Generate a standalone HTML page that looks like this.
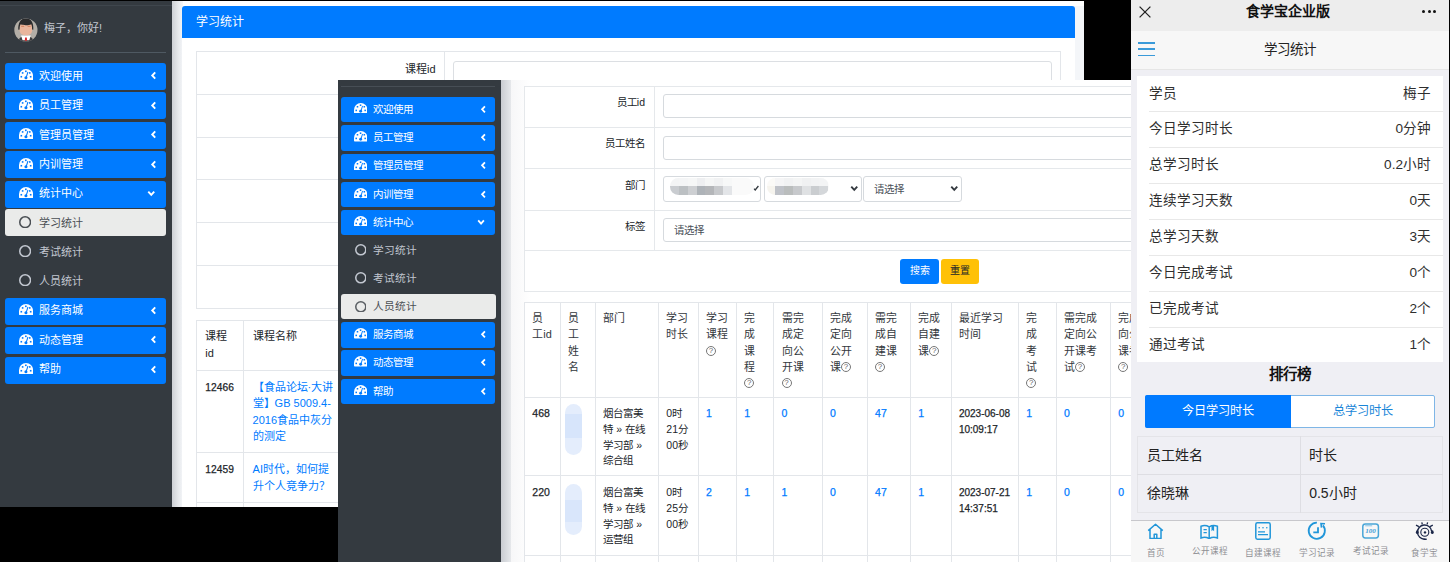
<!DOCTYPE html><html lang="zh-CN"><head><meta charset="utf-8"><style>html,body{margin:0;padding:0;width:1450px;height:562px;overflow:hidden;background:#000;font-family:"Liberation Sans", sans-serif;}div{box-sizing:border-box}</style></head><body>
<div style="position:absolute;left:0;top:1px;width:1084px;height:506px;overflow:hidden;background:#f4f6f9">
<div style="position:absolute;left:171px;top:0px;width:913px;height:5px;background:#fff"></div>
<div style="position:absolute;left:171px;top:0px;width:12px;height:506px;background:linear-gradient(90deg,#c9ccd1,#e6e8eb 60%,#f4f6f9)"></div>
<div style="position:absolute;left:0px;top:0px;width:171.5px;height:506px;background:#343a40"></div>
<div style="position:absolute;left:0px;top:4.2px;width:171.5px;height:1px;background:#3f464d"></div>
<svg style="position:absolute;left:14px;top:16.8px" width="24" height="24" viewBox="0 0 24 24"><defs><clipPath id="cc"><circle cx="11.9" cy="12" r="11.6"/></clipPath></defs><circle cx="11.9" cy="12" r="11.6" fill="#b3aea7"/><g clip-path="url(#cc)"><path d="M4.2 24.5c0.3-4 2-6.3 7.7-6.3s7.4 2.3 7.7 6.3z" fill="#3b3b3d"/><path d="M7 17.6h9.8l-1.5 4.6h-6.8z" fill="#fff"/><path d="M11.1 19.6h1.7l0.3 3.2h-2.3z" fill="#d8262a"/><path d="M5.6 7.5c0-2 1.3-3.8 6.3-3.8s6.3 1.8 6.3 3.8v4.5c0 3.6-2.6 5.3-6.3 5.3s-6.3-1.7-6.3-5.3z" fill="#e9b59c"/><path d="M7.2 8.3h3M13.6 8.3h3" stroke="#c8704a" stroke-width="0.8"/><path d="M4.3 11.8c-0.3-6 1.8-11.5 7.6-11.5s7.9 5.5 7.4 11.5l-1.2-0.3c0-2.2-0.2-4.2-0.9-5.2c-1.5 0.8-4 1-5.5 0.9c-1.6 0-3.6-0.3-5-0.9c-0.9 1.1-1.1 3.1-1.1 5.3z" fill="#2b2b2c"/></g></svg>
<div style="position:absolute;left:44px;top:21.3px;font-size:11px;line-height:12px;color:#c2c7d0;white-space:nowrap;">梅子，你好!</div>
<div style="position:absolute;left:5px;top:51px;width:161px;height:1.3px;background:#4f5962"></div>
<div style="position:absolute;left:5px;top:61.8px;width:161px;height:27px;background:#007bff;border-radius:3px"></div>
<svg style="position:absolute;left:18.6px;top:68.3px" width="14.1" height="11.078571428571427" viewBox="0 0 14 11"><path d="M0 10.2V7A7 7 0 0 1 14 7V10.2Q14 11 13.2 11H0.8Q0 11 0 10.2z" fill="#fff"/><g fill="#007bff"><rect x="2.8" y="3.1" width="1.6" height="1.6"/><rect x="6" y="1.5" width="1.6" height="1.6"/><rect x="9.9" y="3.1" width="1.6" height="1.6"/><rect x="1.5" y="6.9" width="1.6" height="1.6"/><rect x="10.8" y="6.9" width="1.6" height="1.6"/></g><path d="M8.9 3L7.2 8.2" stroke="#007bff" stroke-width="1"/><circle cx="6.9" cy="8.6" r="1.5" fill="#007bff"/></svg>
<div style="position:absolute;left:38.8px;top:68.6px;font-size:11px;line-height:12px;color:#fff;white-space:nowrap;">欢迎使用</div>
<svg style="position:absolute;left:148.9px;top:70.0px" width="9" height="9" viewBox="0 0 10 10"><path d="M6.9 1.5L3.6 5l3.3 3.5" fill="none" stroke="#fff" stroke-width="2.1"/></svg>
<div style="position:absolute;left:5px;top:91.3px;width:161px;height:27px;background:#007bff;border-radius:3px"></div>
<svg style="position:absolute;left:18.6px;top:97.8px" width="14.1" height="11.078571428571427" viewBox="0 0 14 11"><path d="M0 10.2V7A7 7 0 0 1 14 7V10.2Q14 11 13.2 11H0.8Q0 11 0 10.2z" fill="#fff"/><g fill="#007bff"><rect x="2.8" y="3.1" width="1.6" height="1.6"/><rect x="6" y="1.5" width="1.6" height="1.6"/><rect x="9.9" y="3.1" width="1.6" height="1.6"/><rect x="1.5" y="6.9" width="1.6" height="1.6"/><rect x="10.8" y="6.9" width="1.6" height="1.6"/></g><path d="M8.9 3L7.2 8.2" stroke="#007bff" stroke-width="1"/><circle cx="6.9" cy="8.6" r="1.5" fill="#007bff"/></svg>
<div style="position:absolute;left:38.8px;top:98.1px;font-size:11px;line-height:12px;color:#fff;white-space:nowrap;">员工管理</div>
<svg style="position:absolute;left:148.9px;top:99.5px" width="9" height="9" viewBox="0 0 10 10"><path d="M6.9 1.5L3.6 5l3.3 3.5" fill="none" stroke="#fff" stroke-width="2.1"/></svg>
<div style="position:absolute;left:5px;top:120.8px;width:161px;height:27px;background:#007bff;border-radius:3px"></div>
<svg style="position:absolute;left:18.6px;top:127.3px" width="14.1" height="11.078571428571427" viewBox="0 0 14 11"><path d="M0 10.2V7A7 7 0 0 1 14 7V10.2Q14 11 13.2 11H0.8Q0 11 0 10.2z" fill="#fff"/><g fill="#007bff"><rect x="2.8" y="3.1" width="1.6" height="1.6"/><rect x="6" y="1.5" width="1.6" height="1.6"/><rect x="9.9" y="3.1" width="1.6" height="1.6"/><rect x="1.5" y="6.9" width="1.6" height="1.6"/><rect x="10.8" y="6.9" width="1.6" height="1.6"/></g><path d="M8.9 3L7.2 8.2" stroke="#007bff" stroke-width="1"/><circle cx="6.9" cy="8.6" r="1.5" fill="#007bff"/></svg>
<div style="position:absolute;left:38.8px;top:127.6px;font-size:11px;line-height:12px;color:#fff;white-space:nowrap;">管理员管理</div>
<svg style="position:absolute;left:148.9px;top:129.0px" width="9" height="9" viewBox="0 0 10 10"><path d="M6.9 1.5L3.6 5l3.3 3.5" fill="none" stroke="#fff" stroke-width="2.1"/></svg>
<div style="position:absolute;left:5px;top:150.3px;width:161px;height:27px;background:#007bff;border-radius:3px"></div>
<svg style="position:absolute;left:18.6px;top:156.8px" width="14.1" height="11.078571428571427" viewBox="0 0 14 11"><path d="M0 10.2V7A7 7 0 0 1 14 7V10.2Q14 11 13.2 11H0.8Q0 11 0 10.2z" fill="#fff"/><g fill="#007bff"><rect x="2.8" y="3.1" width="1.6" height="1.6"/><rect x="6" y="1.5" width="1.6" height="1.6"/><rect x="9.9" y="3.1" width="1.6" height="1.6"/><rect x="1.5" y="6.9" width="1.6" height="1.6"/><rect x="10.8" y="6.9" width="1.6" height="1.6"/></g><path d="M8.9 3L7.2 8.2" stroke="#007bff" stroke-width="1"/><circle cx="6.9" cy="8.6" r="1.5" fill="#007bff"/></svg>
<div style="position:absolute;left:38.8px;top:157.10000000000002px;font-size:11px;line-height:12px;color:#fff;white-space:nowrap;">内训管理</div>
<svg style="position:absolute;left:148.9px;top:158.5px" width="9" height="9" viewBox="0 0 10 10"><path d="M6.9 1.5L3.6 5l3.3 3.5" fill="none" stroke="#fff" stroke-width="2.1"/></svg>
<div style="position:absolute;left:5px;top:179.5px;width:161px;height:27px;background:#007bff;border-radius:3px"></div>
<svg style="position:absolute;left:18.6px;top:186.0px" width="14.1" height="11.078571428571427" viewBox="0 0 14 11"><path d="M0 10.2V7A7 7 0 0 1 14 7V10.2Q14 11 13.2 11H0.8Q0 11 0 10.2z" fill="#fff"/><g fill="#007bff"><rect x="2.8" y="3.1" width="1.6" height="1.6"/><rect x="6" y="1.5" width="1.6" height="1.6"/><rect x="9.9" y="3.1" width="1.6" height="1.6"/><rect x="1.5" y="6.9" width="1.6" height="1.6"/><rect x="10.8" y="6.9" width="1.6" height="1.6"/></g><path d="M8.9 3L7.2 8.2" stroke="#007bff" stroke-width="1"/><circle cx="6.9" cy="8.6" r="1.5" fill="#007bff"/></svg>
<div style="position:absolute;left:38.8px;top:186.3px;font-size:11px;line-height:12px;color:#fff;white-space:nowrap;">统计中心</div>
<svg style="position:absolute;left:147.2px;top:187.9px" width="8.5" height="8.5" viewBox="0 0 10 10"><path d="M1.5 3l3.5 4 3.5-4" fill="none" stroke="#fff" stroke-width="2.2"/></svg>
<div style="position:absolute;left:5px;top:208.4px;width:161px;height:26.8px;background:#eaebea;border-radius:3px"></div>
<svg style="position:absolute;left:19.2px;top:215px" width="12.3" height="12.3" viewBox="0 0 12.3 12.3"><circle cx="6.15" cy="6.15" r="5.375" fill="none" stroke="#4a4f54" stroke-width="1.55"/></svg>
<div style="position:absolute;left:38.8px;top:215.8px;font-size:11px;line-height:12px;color:#4a4f54;white-space:nowrap;">学习统计</div>
<svg style="position:absolute;left:19.2px;top:244px" width="12.3" height="12.3" viewBox="0 0 12.3 12.3"><circle cx="6.15" cy="6.15" r="5.375" fill="none" stroke="#c2c7d0" stroke-width="1.55"/></svg>
<div style="position:absolute;left:38.8px;top:244.5px;font-size:11px;line-height:12px;color:#c2c7d0;white-space:nowrap;">考试统计</div>
<svg style="position:absolute;left:19.2px;top:273px" width="12.3" height="12.3" viewBox="0 0 12.3 12.3"><circle cx="6.15" cy="6.15" r="5.375" fill="none" stroke="#c2c7d0" stroke-width="1.55"/></svg>
<div style="position:absolute;left:38.8px;top:273.5px;font-size:11px;line-height:12px;color:#c2c7d0;white-space:nowrap;">人员统计</div>
<div style="position:absolute;left:5px;top:296.5px;width:161px;height:27px;background:#007bff;border-radius:3px"></div>
<svg style="position:absolute;left:18.6px;top:303.0px" width="14.1" height="11.078571428571427" viewBox="0 0 14 11"><path d="M0 10.2V7A7 7 0 0 1 14 7V10.2Q14 11 13.2 11H0.8Q0 11 0 10.2z" fill="#fff"/><g fill="#007bff"><rect x="2.8" y="3.1" width="1.6" height="1.6"/><rect x="6" y="1.5" width="1.6" height="1.6"/><rect x="9.9" y="3.1" width="1.6" height="1.6"/><rect x="1.5" y="6.9" width="1.6" height="1.6"/><rect x="10.8" y="6.9" width="1.6" height="1.6"/></g><path d="M8.9 3L7.2 8.2" stroke="#007bff" stroke-width="1"/><circle cx="6.9" cy="8.6" r="1.5" fill="#007bff"/></svg>
<div style="position:absolute;left:38.8px;top:303.3px;font-size:11px;line-height:12px;color:#fff;white-space:nowrap;">服务商城</div>
<svg style="position:absolute;left:148.9px;top:304.7px" width="9" height="9" viewBox="0 0 10 10"><path d="M6.9 1.5L3.6 5l3.3 3.5" fill="none" stroke="#fff" stroke-width="2.1"/></svg>
<div style="position:absolute;left:5px;top:326.0px;width:161px;height:27px;background:#007bff;border-radius:3px"></div>
<svg style="position:absolute;left:18.6px;top:332.5px" width="14.1" height="11.078571428571427" viewBox="0 0 14 11"><path d="M0 10.2V7A7 7 0 0 1 14 7V10.2Q14 11 13.2 11H0.8Q0 11 0 10.2z" fill="#fff"/><g fill="#007bff"><rect x="2.8" y="3.1" width="1.6" height="1.6"/><rect x="6" y="1.5" width="1.6" height="1.6"/><rect x="9.9" y="3.1" width="1.6" height="1.6"/><rect x="1.5" y="6.9" width="1.6" height="1.6"/><rect x="10.8" y="6.9" width="1.6" height="1.6"/></g><path d="M8.9 3L7.2 8.2" stroke="#007bff" stroke-width="1"/><circle cx="6.9" cy="8.6" r="1.5" fill="#007bff"/></svg>
<div style="position:absolute;left:38.8px;top:332.8px;font-size:11px;line-height:12px;color:#fff;white-space:nowrap;">动态管理</div>
<svg style="position:absolute;left:148.9px;top:334.2px" width="9" height="9" viewBox="0 0 10 10"><path d="M6.9 1.5L3.6 5l3.3 3.5" fill="none" stroke="#fff" stroke-width="2.1"/></svg>
<div style="position:absolute;left:5px;top:355.5px;width:161px;height:27px;background:#007bff;border-radius:3px"></div>
<svg style="position:absolute;left:18.6px;top:362.0px" width="14.1" height="11.078571428571427" viewBox="0 0 14 11"><path d="M0 10.2V7A7 7 0 0 1 14 7V10.2Q14 11 13.2 11H0.8Q0 11 0 10.2z" fill="#fff"/><g fill="#007bff"><rect x="2.8" y="3.1" width="1.6" height="1.6"/><rect x="6" y="1.5" width="1.6" height="1.6"/><rect x="9.9" y="3.1" width="1.6" height="1.6"/><rect x="1.5" y="6.9" width="1.6" height="1.6"/><rect x="10.8" y="6.9" width="1.6" height="1.6"/></g><path d="M8.9 3L7.2 8.2" stroke="#007bff" stroke-width="1"/><circle cx="6.9" cy="8.6" r="1.5" fill="#007bff"/></svg>
<div style="position:absolute;left:38.8px;top:362.3px;font-size:11px;line-height:12px;color:#fff;white-space:nowrap;">帮助</div>
<svg style="position:absolute;left:148.9px;top:363.7px" width="9" height="9" viewBox="0 0 10 10"><path d="M6.9 1.5L3.6 5l3.3 3.5" fill="none" stroke="#fff" stroke-width="2.1"/></svg>
<div style="position:absolute;left:182px;top:5px;width:893px;height:501px;background:#fff;border-radius:3px 3px 0 0"></div>
<div style="position:absolute;left:182px;top:5px;width:893px;height:32px;background:#007bff;border-radius:3px 3px 0 0"></div>
<div style="position:absolute;left:196.3px;top:15px;font-size:12px;line-height:13px;color:#fff;white-space:nowrap;">学习统计</div>
<div style="position:absolute;left:195.7px;top:50.2px;width:865px;height:258px;border:1px solid #e3e6ea"></div>
<div style="position:absolute;left:195.7px;top:92.9px;width:865px;height:1px;background:#e3e6ea"></div>
<div style="position:absolute;left:195.7px;top:135.6px;width:865px;height:1px;background:#e3e6ea"></div>
<div style="position:absolute;left:195.7px;top:178.2px;width:865px;height:1px;background:#e3e6ea"></div>
<div style="position:absolute;left:195.7px;top:221.0px;width:865px;height:1px;background:#e3e6ea"></div>
<div style="position:absolute;left:195.7px;top:263.7px;width:865px;height:1px;background:#e3e6ea"></div>
<div style="position:absolute;left:444.3px;top:50.2px;width:1px;height:258px;background:#e3e6ea"></div>
<div style="position:absolute;right:648.5px;top:61.5px;font-size:11px;line-height:13px;color:#212529;white-space:nowrap;text-align:right;">课程id</div>
<div style="position:absolute;left:453px;top:59.5px;width:599px;height:25px;border:1px solid #dcdfe3;border-radius:3px;background:#fff"></div>
<div style="position:absolute;left:195.6px;top:318.6px;width:866px;height:200px;border:1px solid #e3e6ea"></div>
<div style="position:absolute;left:242.6px;top:318.6px;width:1px;height:200px;background:#e3e6ea"></div>
<div style="position:absolute;left:195.6px;top:368.7px;width:866px;height:1px;background:#e3e6ea"></div>
<div style="position:absolute;left:195.6px;top:451.2px;width:866px;height:1px;background:#e3e6ea"></div>
<div style="position:absolute;left:195.6px;top:501px;width:866px;height:1px;background:#e3e6ea"></div>
<div style="position:absolute;left:205.3px;top:327.2px;font-size:11px;line-height:16.7px;color:#212529;white-space:nowrap;">课程<br>id</div>
<div style="position:absolute;left:252.6px;top:327.2px;font-size:11px;line-height:16.7px;color:#212529;white-space:nowrap;">课程名称</div>
<div style="position:absolute;left:205.3px;top:379.0px;font-size:10.2px;line-height:16.4px;color:#212529;white-space:nowrap;-webkit-text-stroke:0.25px #212529;letter-spacing:0.1px">12466</div>
<div style="position:absolute;left:252.6px;top:377.8px;font-size:11px;line-height:16.4px;color:#007bff;white-space:nowrap;">【食品论坛·大讲<br>堂】GB 5009.4-<br>2016食品中灰分<br>的测定</div>
<div style="position:absolute;left:205.3px;top:461.0px;font-size:10.2px;line-height:16.4px;color:#212529;white-space:nowrap;-webkit-text-stroke:0.25px #212529;letter-spacing:0.1px">12459</div>
<div style="position:absolute;left:252.6px;top:460.4px;font-size:11px;line-height:16.4px;color:#007bff;white-space:nowrap;">AI时代，如何提<br>升个人竞争力？</div>
</div>
<div style="position:absolute;left:338px;top:80px;width:793px;height:482px;overflow:hidden;background:#f4f6f9">
<div style="position:absolute;left:163px;top:0px;width:10px;height:482px;background:linear-gradient(90deg,#c9ccd1,#e6e8eb)"></div>
<div style="position:absolute;left:173px;top:0px;width:620px;height:482px;background:linear-gradient(90deg,#f7f7f8,#fff 20px)"></div>
<div style="position:absolute;left:0px;top:0px;width:163px;height:482px;background:#343a40"></div>
<div style="position:absolute;left:3.1999999999999886px;top:6px;width:154.3px;height:1.2px;background:#474e55"></div>
<div style="position:absolute;left:3.1999999999999886px;top:16.900000000000006px;width:154.3px;height:25.6px;background:#007bff;border-radius:3px"></div>
<svg style="position:absolute;left:15.699999999999989px;top:22.900000000000006px" width="13.5" height="10.607142857142858" viewBox="0 0 14 11"><path d="M0 10.2V7A7 7 0 0 1 14 7V10.2Q14 11 13.2 11H0.8Q0 11 0 10.2z" fill="#fff"/><g fill="#007bff"><rect x="2.8" y="3.1" width="1.6" height="1.6"/><rect x="6" y="1.5" width="1.6" height="1.6"/><rect x="9.9" y="3.1" width="1.6" height="1.6"/><rect x="1.5" y="6.9" width="1.6" height="1.6"/><rect x="10.8" y="6.9" width="1.6" height="1.6"/></g><path d="M8.9 3L7.2 8.2" stroke="#007bff" stroke-width="1"/><circle cx="6.9" cy="8.6" r="1.5" fill="#007bff"/></svg>
<div style="position:absolute;left:34.69999999999999px;top:22.800000000000004px;font-size:10.5px;line-height:12px;color:#fff;white-space:nowrap;">欢迎使用</div>
<svg style="position:absolute;left:140.60000000000002px;top:24.800000000000004px" width="8.6" height="8.6" viewBox="0 0 10 10"><path d="M6.9 1.5L3.6 5l3.3 3.5" fill="none" stroke="#fff" stroke-width="2.1"/></svg>
<div style="position:absolute;left:3.1999999999999886px;top:45.2px;width:154.3px;height:25.6px;background:#007bff;border-radius:3px"></div>
<svg style="position:absolute;left:15.699999999999989px;top:51.2px" width="13.5" height="10.607142857142858" viewBox="0 0 14 11"><path d="M0 10.2V7A7 7 0 0 1 14 7V10.2Q14 11 13.2 11H0.8Q0 11 0 10.2z" fill="#fff"/><g fill="#007bff"><rect x="2.8" y="3.1" width="1.6" height="1.6"/><rect x="6" y="1.5" width="1.6" height="1.6"/><rect x="9.9" y="3.1" width="1.6" height="1.6"/><rect x="1.5" y="6.9" width="1.6" height="1.6"/><rect x="10.8" y="6.9" width="1.6" height="1.6"/></g><path d="M8.9 3L7.2 8.2" stroke="#007bff" stroke-width="1"/><circle cx="6.9" cy="8.6" r="1.5" fill="#007bff"/></svg>
<div style="position:absolute;left:34.69999999999999px;top:51.1px;font-size:10.5px;line-height:12px;color:#fff;white-space:nowrap;">员工管理</div>
<svg style="position:absolute;left:140.60000000000002px;top:53.1px" width="8.6" height="8.6" viewBox="0 0 10 10"><path d="M6.9 1.5L3.6 5l3.3 3.5" fill="none" stroke="#fff" stroke-width="2.1"/></svg>
<div style="position:absolute;left:3.1999999999999886px;top:73.5px;width:154.3px;height:25.6px;background:#007bff;border-radius:3px"></div>
<svg style="position:absolute;left:15.699999999999989px;top:79.5px" width="13.5" height="10.607142857142858" viewBox="0 0 14 11"><path d="M0 10.2V7A7 7 0 0 1 14 7V10.2Q14 11 13.2 11H0.8Q0 11 0 10.2z" fill="#fff"/><g fill="#007bff"><rect x="2.8" y="3.1" width="1.6" height="1.6"/><rect x="6" y="1.5" width="1.6" height="1.6"/><rect x="9.9" y="3.1" width="1.6" height="1.6"/><rect x="1.5" y="6.9" width="1.6" height="1.6"/><rect x="10.8" y="6.9" width="1.6" height="1.6"/></g><path d="M8.9 3L7.2 8.2" stroke="#007bff" stroke-width="1"/><circle cx="6.9" cy="8.6" r="1.5" fill="#007bff"/></svg>
<div style="position:absolute;left:34.69999999999999px;top:79.4px;font-size:10.5px;line-height:12px;color:#fff;white-space:nowrap;">管理员管理</div>
<svg style="position:absolute;left:140.60000000000002px;top:81.4px" width="8.6" height="8.6" viewBox="0 0 10 10"><path d="M6.9 1.5L3.6 5l3.3 3.5" fill="none" stroke="#fff" stroke-width="2.1"/></svg>
<div style="position:absolute;left:3.1999999999999886px;top:101.80000000000001px;width:154.3px;height:25.6px;background:#007bff;border-radius:3px"></div>
<svg style="position:absolute;left:15.699999999999989px;top:107.80000000000001px" width="13.5" height="10.607142857142858" viewBox="0 0 14 11"><path d="M0 10.2V7A7 7 0 0 1 14 7V10.2Q14 11 13.2 11H0.8Q0 11 0 10.2z" fill="#fff"/><g fill="#007bff"><rect x="2.8" y="3.1" width="1.6" height="1.6"/><rect x="6" y="1.5" width="1.6" height="1.6"/><rect x="9.9" y="3.1" width="1.6" height="1.6"/><rect x="1.5" y="6.9" width="1.6" height="1.6"/><rect x="10.8" y="6.9" width="1.6" height="1.6"/></g><path d="M8.9 3L7.2 8.2" stroke="#007bff" stroke-width="1"/><circle cx="6.9" cy="8.6" r="1.5" fill="#007bff"/></svg>
<div style="position:absolute;left:34.69999999999999px;top:107.70000000000002px;font-size:10.5px;line-height:12px;color:#fff;white-space:nowrap;">内训管理</div>
<svg style="position:absolute;left:140.60000000000002px;top:109.70000000000002px" width="8.6" height="8.6" viewBox="0 0 10 10"><path d="M6.9 1.5L3.6 5l3.3 3.5" fill="none" stroke="#fff" stroke-width="2.1"/></svg>
<div style="position:absolute;left:3.1999999999999886px;top:129.8px;width:154.3px;height:25.6px;background:#007bff;border-radius:3px"></div>
<svg style="position:absolute;left:15.699999999999989px;top:135.8px" width="13.5" height="10.607142857142858" viewBox="0 0 14 11"><path d="M0 10.2V7A7 7 0 0 1 14 7V10.2Q14 11 13.2 11H0.8Q0 11 0 10.2z" fill="#fff"/><g fill="#007bff"><rect x="2.8" y="3.1" width="1.6" height="1.6"/><rect x="6" y="1.5" width="1.6" height="1.6"/><rect x="9.9" y="3.1" width="1.6" height="1.6"/><rect x="1.5" y="6.9" width="1.6" height="1.6"/><rect x="10.8" y="6.9" width="1.6" height="1.6"/></g><path d="M8.9 3L7.2 8.2" stroke="#007bff" stroke-width="1"/><circle cx="6.9" cy="8.6" r="1.5" fill="#007bff"/></svg>
<div style="position:absolute;left:34.69999999999999px;top:135.70000000000002px;font-size:10.5px;line-height:12px;color:#fff;white-space:nowrap;">统计中心</div>
<svg style="position:absolute;left:139.3px;top:137.8px" width="8.1" height="8.1" viewBox="0 0 10 10"><path d="M1.5 3l3.5 4 3.5-4" fill="none" stroke="#fff" stroke-width="2.2"/></svg>
<svg style="position:absolute;left:16.600000000000023px;top:164px" width="11.6" height="11.6" viewBox="0 0 11.6 11.6"><circle cx="5.8" cy="5.8" r="5.0249999999999995" fill="none" stroke="#c2c7d0" stroke-width="1.55"/></svg>
<div style="position:absolute;left:34.69999999999999px;top:164px;font-size:10.7px;line-height:12px;color:#c2c7d0;white-space:nowrap;">学习统计</div>
<svg style="position:absolute;left:16.600000000000023px;top:192px" width="11.6" height="11.6" viewBox="0 0 11.6 11.6"><circle cx="5.8" cy="5.8" r="5.0249999999999995" fill="none" stroke="#c2c7d0" stroke-width="1.55"/></svg>
<div style="position:absolute;left:34.69999999999999px;top:192px;font-size:10.7px;line-height:12px;color:#c2c7d0;white-space:nowrap;">考试统计</div>
<div style="position:absolute;left:3.1999999999999886px;top:214px;width:155px;height:25.4px;background:#eaebea;border-radius:3px"></div>
<svg style="position:absolute;left:16.600000000000023px;top:220.60000000000002px" width="11.6" height="11.6" viewBox="0 0 11.6 11.6"><circle cx="5.8" cy="5.8" r="5.0249999999999995" fill="none" stroke="#5a5f64" stroke-width="1.55"/></svg>
<div style="position:absolute;left:34.69999999999999px;top:219.60000000000002px;font-size:10.7px;line-height:12px;color:#4a4f54;white-space:nowrap;">人员统计</div>
<div style="position:absolute;left:3.1999999999999886px;top:242.0px;width:154.3px;height:25.6px;background:#007bff;border-radius:3px"></div>
<svg style="position:absolute;left:15.699999999999989px;top:248.0px" width="13.5" height="10.607142857142858" viewBox="0 0 14 11"><path d="M0 10.2V7A7 7 0 0 1 14 7V10.2Q14 11 13.2 11H0.8Q0 11 0 10.2z" fill="#fff"/><g fill="#007bff"><rect x="2.8" y="3.1" width="1.6" height="1.6"/><rect x="6" y="1.5" width="1.6" height="1.6"/><rect x="9.9" y="3.1" width="1.6" height="1.6"/><rect x="1.5" y="6.9" width="1.6" height="1.6"/><rect x="10.8" y="6.9" width="1.6" height="1.6"/></g><path d="M8.9 3L7.2 8.2" stroke="#007bff" stroke-width="1"/><circle cx="6.9" cy="8.6" r="1.5" fill="#007bff"/></svg>
<div style="position:absolute;left:34.69999999999999px;top:247.9px;font-size:10.5px;line-height:12px;color:#fff;white-space:nowrap;">服务商城</div>
<svg style="position:absolute;left:140.60000000000002px;top:249.9px" width="8.6" height="8.6" viewBox="0 0 10 10"><path d="M6.9 1.5L3.6 5l3.3 3.5" fill="none" stroke="#fff" stroke-width="2.1"/></svg>
<div style="position:absolute;left:3.1999999999999886px;top:270.4px;width:154.3px;height:25.6px;background:#007bff;border-radius:3px"></div>
<svg style="position:absolute;left:15.699999999999989px;top:276.4px" width="13.5" height="10.607142857142858" viewBox="0 0 14 11"><path d="M0 10.2V7A7 7 0 0 1 14 7V10.2Q14 11 13.2 11H0.8Q0 11 0 10.2z" fill="#fff"/><g fill="#007bff"><rect x="2.8" y="3.1" width="1.6" height="1.6"/><rect x="6" y="1.5" width="1.6" height="1.6"/><rect x="9.9" y="3.1" width="1.6" height="1.6"/><rect x="1.5" y="6.9" width="1.6" height="1.6"/><rect x="10.8" y="6.9" width="1.6" height="1.6"/></g><path d="M8.9 3L7.2 8.2" stroke="#007bff" stroke-width="1"/><circle cx="6.9" cy="8.6" r="1.5" fill="#007bff"/></svg>
<div style="position:absolute;left:34.69999999999999px;top:276.29999999999995px;font-size:10.5px;line-height:12px;color:#fff;white-space:nowrap;">动态管理</div>
<svg style="position:absolute;left:140.60000000000002px;top:278.29999999999995px" width="8.6" height="8.6" viewBox="0 0 10 10"><path d="M6.9 1.5L3.6 5l3.3 3.5" fill="none" stroke="#fff" stroke-width="2.1"/></svg>
<div style="position:absolute;left:3.1999999999999886px;top:298.8px;width:154.3px;height:25.6px;background:#007bff;border-radius:3px"></div>
<svg style="position:absolute;left:15.699999999999989px;top:304.8px" width="13.5" height="10.607142857142858" viewBox="0 0 14 11"><path d="M0 10.2V7A7 7 0 0 1 14 7V10.2Q14 11 13.2 11H0.8Q0 11 0 10.2z" fill="#fff"/><g fill="#007bff"><rect x="2.8" y="3.1" width="1.6" height="1.6"/><rect x="6" y="1.5" width="1.6" height="1.6"/><rect x="9.9" y="3.1" width="1.6" height="1.6"/><rect x="1.5" y="6.9" width="1.6" height="1.6"/><rect x="10.8" y="6.9" width="1.6" height="1.6"/></g><path d="M8.9 3L7.2 8.2" stroke="#007bff" stroke-width="1"/><circle cx="6.9" cy="8.6" r="1.5" fill="#007bff"/></svg>
<div style="position:absolute;left:34.69999999999999px;top:304.7px;font-size:10.5px;line-height:12px;color:#fff;white-space:nowrap;">帮助</div>
<svg style="position:absolute;left:140.60000000000002px;top:306.7px" width="8.6" height="8.6" viewBox="0 0 10 10"><path d="M6.9 1.5L3.6 5l3.3 3.5" fill="none" stroke="#fff" stroke-width="2.1"/></svg>
<div style="position:absolute;left:185.89999999999998px;top:6.0px;width:700px;height:206px;border:1px solid #e5e8eb;background:#fff"></div>
<div style="position:absolute;left:185.89999999999998px;top:47px;width:700px;height:1px;background:#e5e8eb"></div>
<div style="position:absolute;left:185.89999999999998px;top:88.30000000000001px;width:700px;height:1px;background:#e5e8eb"></div>
<div style="position:absolute;left:185.89999999999998px;top:129.6px;width:700px;height:1px;background:#e5e8eb"></div>
<div style="position:absolute;left:185.89999999999998px;top:170.4px;width:700px;height:1px;background:#e5e8eb"></div>
<div style="position:absolute;left:316.20000000000005px;top:6.200000000000003px;width:1px;height:164.4px;background:#e5e8eb"></div>
<div style="position:absolute;right:486px;top:16px;font-size:10.5px;line-height:12px;color:#212529;white-space:nowrap;text-align:right;">员工id</div>
<div style="position:absolute;right:486px;top:57px;font-size:10.5px;line-height:12px;color:#212529;white-space:nowrap;text-align:right;">员工姓名</div>
<div style="position:absolute;right:486px;top:98.5px;font-size:10.5px;line-height:12px;color:#212529;white-space:nowrap;text-align:right;">部门</div>
<div style="position:absolute;right:486px;top:139.5px;font-size:10.5px;line-height:12px;color:#212529;white-space:nowrap;text-align:right;">标签</div>
<div style="position:absolute;left:324.6px;top:14.200000000000003px;width:600px;height:24.2px;border:1px solid #d6dade;border-radius:3px;background:#fff"></div>
<div style="position:absolute;left:324.6px;top:56.0px;width:600px;height:24.2px;border:1px solid #d6dade;border-radius:3px;background:#fff"></div>
<div style="position:absolute;left:324.79999999999995px;top:96.4px;width:98.7px;height:25.2px;border:1px solid #d6dade;border-radius:3px;background:#fff"></div>
<div style="position:absolute;left:425.6px;top:96.4px;width:98.1px;height:25.2px;border:1px solid #d6dade;border-radius:3px;background:#fff"></div>
<div style="position:absolute;left:525.2px;top:96.4px;width:98.4px;height:25.2px;border:1px solid #d6dade;border-radius:3px;background:#fff"></div>
<div style="position:absolute;left:324.6px;top:137.8px;width:600px;height:24.3px;border:1px solid #d6dade;border-radius:3px;background:#fff"></div>
<div style="position:absolute;left:335.70000000000005px;top:143.5px;font-size:10.5px;line-height:12px;color:#495057;white-space:nowrap;">请选择</div>
<div style="position:absolute;left:535.5px;top:102.5px;font-size:10.5px;line-height:12px;color:#495057;white-space:nowrap;">请选择</div>
<svg style="position:absolute;left:512.3px;top:104.19999999999999px" width="8.5" height="8.5" viewBox="0 0 10 10"><path d="M1.5 3l3.5 4 3.5-4" fill="none" stroke="#343a40" stroke-width="2.2"/></svg>
<svg style="position:absolute;left:611.8px;top:104.19999999999999px" width="8.5" height="8.5" viewBox="0 0 10 10"><path d="M1.5 3l3.5 4 3.5-4" fill="none" stroke="#343a40" stroke-width="2.2"/></svg>
<svg style="position:absolute;left:414.5px;top:105px" width="6" height="6" viewBox="0 0 6 6"><path d="M0.8 3.6L2.2 5L5.4 1" fill="none" stroke="#343a40" stroke-width="1.3"/></svg>
<div style="position:absolute;left:332.20000000000005px;top:98.30000000000001px;width:83.4px;height:16.7px;border-radius:8.35px;overflow:hidden;background:#fafafa"><div style="position:absolute;left:0.0px;top:0;width:9.100000000000001px;height:7.848999999999999px;background:#f3f4f5"></div><div style="position:absolute;left:8.8px;top:0;width:9.100000000000001px;height:7.848999999999999px;background:#f4f5f6"></div><div style="position:absolute;left:17.6px;top:0;width:9.100000000000001px;height:7.848999999999999px;background:#f6f7f7"></div><div style="position:absolute;left:26.400000000000002px;top:0;width:9.100000000000001px;height:7.848999999999999px;background:#eeeff1"></div><div style="position:absolute;left:35.2px;top:0;width:9.100000000000001px;height:7.848999999999999px;background:#f5f6f6"></div><div style="position:absolute;left:44.0px;top:0;width:9.100000000000001px;height:7.848999999999999px;background:#f1f2f3"></div><div style="position:absolute;left:52.800000000000004px;top:0;width:9.100000000000001px;height:7.848999999999999px;background:#f7f8f8"></div><div style="position:absolute;left:0.0px;top:7.848999999999999px;width:9.100000000000001px;height:8.851px;background:#c9ccd0"></div><div style="position:absolute;left:8.8px;top:7.848999999999999px;width:9.100000000000001px;height:8.851px;background:#bcc0c3"></div><div style="position:absolute;left:17.6px;top:7.848999999999999px;width:9.100000000000001px;height:8.851px;background:#cdcfd2"></div><div style="position:absolute;left:26.400000000000002px;top:7.848999999999999px;width:9.100000000000001px;height:8.851px;background:#aeb3b8"></div><div style="position:absolute;left:35.2px;top:7.848999999999999px;width:9.100000000000001px;height:8.851px;background:#b4b6b9"></div><div style="position:absolute;left:44.0px;top:7.848999999999999px;width:9.100000000000001px;height:8.851px;background:#c7c9cc"></div><div style="position:absolute;left:52.800000000000004px;top:7.848999999999999px;width:9.100000000000001px;height:8.851px;background:#e3e5e8"></div></div>
<div style="position:absolute;left:429px;top:98.30000000000001px;width:62px;height:16.7px;border-radius:8.35px;overflow:hidden;background:#fafafa"><div style="position:absolute;left:-0.5px;top:0;width:9.100000000000001px;height:7.848999999999999px;background:#fbfaf7"></div><div style="position:absolute;left:8.3px;top:0;width:9.100000000000001px;height:7.848999999999999px;background:#f5f5f6"></div><div style="position:absolute;left:17.1px;top:0;width:9.100000000000001px;height:7.848999999999999px;background:#f1f2f3"></div><div style="position:absolute;left:25.900000000000002px;top:0;width:9.100000000000001px;height:7.848999999999999px;background:#f4f5f5"></div><div style="position:absolute;left:34.7px;top:0;width:9.100000000000001px;height:7.848999999999999px;background:#f0f1f2"></div><div style="position:absolute;left:43.5px;top:0;width:9.100000000000001px;height:7.848999999999999px;background:#f2f3f4"></div><div style="position:absolute;left:52.300000000000004px;top:0;width:9.100000000000001px;height:7.848999999999999px;background:#f3f4f5"></div><div style="position:absolute;left:-0.5px;top:7.848999999999999px;width:9.100000000000001px;height:8.851px;background:#f6f4ee"></div><div style="position:absolute;left:8.3px;top:7.848999999999999px;width:9.100000000000001px;height:8.851px;background:#bfc2c8"></div><div style="position:absolute;left:17.1px;top:7.848999999999999px;width:9.100000000000001px;height:8.851px;background:#babdbd"></div><div style="position:absolute;left:25.900000000000002px;top:7.848999999999999px;width:9.100000000000001px;height:8.851px;background:#c7c9cc"></div><div style="position:absolute;left:34.7px;top:7.848999999999999px;width:9.100000000000001px;height:8.851px;background:#dfe1e3"></div><div style="position:absolute;left:43.5px;top:7.848999999999999px;width:9.100000000000001px;height:8.851px;background:#cacdd0"></div><div style="position:absolute;left:52.300000000000004px;top:7.848999999999999px;width:9.100000000000001px;height:8.851px;background:#d4d7da"></div></div>
<div style="position:absolute;left:562px;top:179px;width:39.3px;height:24.7px;background:#007bff;border-radius:3px"></div>
<div style="position:absolute;left:571.5px;top:184.8px;font-size:10px;line-height:12px;color:#fff;white-space:nowrap;">搜索</div>
<div style="position:absolute;left:602.6px;top:179px;width:38.9px;height:24.7px;background:#ffc107;border-radius:3px"></div>
<div style="position:absolute;left:612px;top:184.8px;font-size:10px;line-height:12px;color:#212529;white-space:nowrap;">重置</div>
<div style="position:absolute;left:186.0px;top:222.0px;width:700px;height:300px;background:#fff"></div>
<div style="position:absolute;left:186.0px;top:222.0px;width:700px;height:1px;background:#e3e6ea"></div>
<div style="position:absolute;left:186.0px;top:316.8px;width:700px;height:1px;background:#e3e6ea"></div>
<div style="position:absolute;left:186.0px;top:395.3px;width:700px;height:1px;background:#e3e6ea"></div>
<div style="position:absolute;left:186.0px;top:474.5px;width:700px;height:1px;background:#e3e6ea"></div>
<div style="position:absolute;left:186.0px;top:222.0px;width:1px;height:300px;background:#e3e6ea"></div>
<div style="position:absolute;left:222.0px;top:222.0px;width:1px;height:300px;background:#e3e6ea"></div>
<div style="position:absolute;left:257.0px;top:222.0px;width:1px;height:300px;background:#e3e6ea"></div>
<div style="position:absolute;left:320.0px;top:222.0px;width:1px;height:300px;background:#e3e6ea"></div>
<div style="position:absolute;left:359.79999999999995px;top:222.0px;width:1px;height:300px;background:#e3e6ea"></div>
<div style="position:absolute;left:398.0px;top:222.0px;width:1px;height:300px;background:#e3e6ea"></div>
<div style="position:absolute;left:435.20000000000005px;top:222.0px;width:1px;height:300px;background:#e3e6ea"></div>
<div style="position:absolute;left:483.79999999999995px;top:222.0px;width:1px;height:300px;background:#e3e6ea"></div>
<div style="position:absolute;left:528.8px;top:222.0px;width:1px;height:300px;background:#e3e6ea"></div>
<div style="position:absolute;left:571.9px;top:222.0px;width:1px;height:300px;background:#e3e6ea"></div>
<div style="position:absolute;left:612.6px;top:222.0px;width:1px;height:300px;background:#e3e6ea"></div>
<div style="position:absolute;left:679.9px;top:222.0px;width:1px;height:300px;background:#e3e6ea"></div>
<div style="position:absolute;left:717.7px;top:222.0px;width:1px;height:300px;background:#e3e6ea"></div>
<div style="position:absolute;left:771.9000000000001px;top:222.0px;width:1px;height:300px;background:#e3e6ea"></div>
<div style="position:absolute;left:194.29999999999995px;top:230.39999999999998px;font-size:10.9px;line-height:16.1px;color:#33383d;white-space:nowrap;">员<br>工id</div>
<div style="position:absolute;left:230.29999999999995px;top:230.39999999999998px;font-size:10.9px;line-height:16.1px;color:#33383d;white-space:nowrap;">员<br>工<br>姓<br>名</div>
<div style="position:absolute;left:265.29999999999995px;top:230.39999999999998px;font-size:10.9px;line-height:16.1px;color:#33383d;white-space:nowrap;">部门</div>
<div style="position:absolute;left:328.29999999999995px;top:230.39999999999998px;font-size:10.9px;line-height:16.1px;color:#33383d;white-space:nowrap;">学习<br>时长</div>
<div style="position:absolute;left:368.0999999999999px;top:230.39999999999998px;font-size:10.9px;line-height:16.1px;color:#33383d;white-space:nowrap;">学习<br>课程<br><span style="display:inline-block;width:10px;height:10px;border:1px solid #777;border-radius:50%;font-size:8px;line-height:8.5px;text-align:center;vertical-align:2px;box-sizing:border-box;color:#666">?</span></div>
<div style="position:absolute;left:406.29999999999995px;top:230.39999999999998px;font-size:10.9px;line-height:16.1px;color:#33383d;white-space:nowrap;">完<br>成<br>课<br>程<br><span style="display:inline-block;width:10px;height:10px;border:1px solid #777;border-radius:50%;font-size:8px;line-height:8.5px;text-align:center;vertical-align:2px;box-sizing:border-box;color:#666">?</span></div>
<div style="position:absolute;left:443.5px;top:230.39999999999998px;font-size:10.9px;line-height:16.1px;color:#33383d;white-space:nowrap;">需完<br>成定<br>向公<br>开课<br><span style="display:inline-block;width:10px;height:10px;border:1px solid #777;border-radius:50%;font-size:8px;line-height:8.5px;text-align:center;vertical-align:2px;box-sizing:border-box;color:#666">?</span></div>
<div style="position:absolute;left:492.0999999999999px;top:230.39999999999998px;font-size:10.9px;line-height:16.1px;color:#33383d;white-space:nowrap;">完成<br>定向<br>公开<br>课<span style="display:inline-block;width:10px;height:10px;border:1px solid #777;border-radius:50%;font-size:8px;line-height:8.5px;text-align:center;vertical-align:2px;box-sizing:border-box;color:#666">?</span></div>
<div style="position:absolute;left:537.0999999999999px;top:230.39999999999998px;font-size:10.9px;line-height:16.1px;color:#33383d;white-space:nowrap;">需完<br>成自<br>建课<br><span style="display:inline-block;width:10px;height:10px;border:1px solid #777;border-radius:50%;font-size:8px;line-height:8.5px;text-align:center;vertical-align:2px;box-sizing:border-box;color:#666">?</span></div>
<div style="position:absolute;left:580.1999999999999px;top:230.39999999999998px;font-size:10.9px;line-height:16.1px;color:#33383d;white-space:nowrap;">完成<br>自建<br>课<span style="display:inline-block;width:10px;height:10px;border:1px solid #777;border-radius:50%;font-size:8px;line-height:8.5px;text-align:center;vertical-align:2px;box-sizing:border-box;color:#666">?</span></div>
<div style="position:absolute;left:620.9px;top:230.39999999999998px;font-size:10.9px;line-height:16.1px;color:#33383d;white-space:nowrap;">最近学习<br>时间</div>
<div style="position:absolute;left:688.2px;top:230.39999999999998px;font-size:10.9px;line-height:16.1px;color:#33383d;white-space:nowrap;">完<br>成<br>考<br>试<br><span style="display:inline-block;width:10px;height:10px;border:1px solid #777;border-radius:50%;font-size:8px;line-height:8.5px;text-align:center;vertical-align:2px;box-sizing:border-box;color:#666">?</span></div>
<div style="position:absolute;left:726.0px;top:230.39999999999998px;font-size:10.9px;line-height:16.1px;color:#33383d;white-space:nowrap;">需完成<br>定向公<br>开课考<br>试<span style="display:inline-block;width:10px;height:10px;border:1px solid #777;border-radius:50%;font-size:8px;line-height:8.5px;text-align:center;vertical-align:2px;box-sizing:border-box;color:#666">?</span></div>
<div style="position:absolute;left:780.2px;top:230.39999999999998px;font-size:10.9px;line-height:16.1px;color:#33383d;white-space:nowrap;">完成<br>向公<br>课考<br><span style="display:inline-block;width:10px;height:10px;border:1px solid #777;border-radius:50%;font-size:8px;line-height:8.5px;text-align:center;vertical-align:2px;box-sizing:border-box;color:#666">?</span></div>
<div style="position:absolute;left:194.29999999999995px;top:326px;font-size:10.5px;line-height:15.8px;color:#212529;white-space:nowrap;-webkit-text-stroke:0.25px #212529;">468</div>
<div style="position:absolute;left:265.29999999999995px;top:326px;font-size:10.5px;line-height:15.8px;color:#212529;white-space:nowrap;">烟台富美<br>特 » 在线<br>学习部 »<br>综合组</div>
<div style="position:absolute;left:328.29999999999995px;top:326px;font-size:10.5px;line-height:15.8px;color:#212529;white-space:nowrap;">0时<br>21分<br>00秒</div>
<div style="position:absolute;left:368.0999999999999px;top:326px;font-size:10.5px;line-height:15.8px;color:#007bff;white-space:nowrap;-webkit-text-stroke:0.25px #007bff;">1</div>
<div style="position:absolute;left:406.29999999999995px;top:326px;font-size:10.5px;line-height:15.8px;color:#007bff;white-space:nowrap;-webkit-text-stroke:0.25px #007bff;">1</div>
<div style="position:absolute;left:443.5px;top:326px;font-size:10.5px;line-height:15.8px;color:#007bff;white-space:nowrap;-webkit-text-stroke:0.25px #007bff;">0</div>
<div style="position:absolute;left:492.0999999999999px;top:326px;font-size:10.5px;line-height:15.8px;color:#007bff;white-space:nowrap;-webkit-text-stroke:0.25px #007bff;">0</div>
<div style="position:absolute;left:537.0999999999999px;top:326px;font-size:10.5px;line-height:15.8px;color:#007bff;white-space:nowrap;-webkit-text-stroke:0.25px #007bff;">47</div>
<div style="position:absolute;left:580.1999999999999px;top:326px;font-size:10.5px;line-height:15.8px;color:#007bff;white-space:nowrap;-webkit-text-stroke:0.25px #007bff;">1</div>
<div style="position:absolute;left:620.9px;top:326px;font-size:10px;line-height:15.8px;color:#212529;white-space:nowrap;-webkit-text-stroke:0.25px #212529;">2023-06-08<br>10:09:17</div>
<div style="position:absolute;left:688.2px;top:326px;font-size:10.5px;line-height:15.8px;color:#007bff;white-space:nowrap;-webkit-text-stroke:0.25px #007bff;">1</div>
<div style="position:absolute;left:726.0px;top:326px;font-size:10.5px;line-height:15.8px;color:#007bff;white-space:nowrap;-webkit-text-stroke:0.25px #007bff;">0</div>
<div style="position:absolute;left:780.2px;top:326px;font-size:10.5px;line-height:15.8px;color:#007bff;white-space:nowrap;-webkit-text-stroke:0.25px #007bff;">0</div>
<div style="position:absolute;left:194.29999999999995px;top:405px;font-size:10.5px;line-height:15.8px;color:#212529;white-space:nowrap;-webkit-text-stroke:0.25px #212529;">220</div>
<div style="position:absolute;left:265.29999999999995px;top:405px;font-size:10.5px;line-height:15.8px;color:#212529;white-space:nowrap;">烟台富美<br>特 » 在线<br>学习部 »<br>运营组</div>
<div style="position:absolute;left:328.29999999999995px;top:405px;font-size:10.5px;line-height:15.8px;color:#212529;white-space:nowrap;">0时<br>25分<br>00秒</div>
<div style="position:absolute;left:368.0999999999999px;top:405px;font-size:10.5px;line-height:15.8px;color:#007bff;white-space:nowrap;-webkit-text-stroke:0.25px #007bff;">2</div>
<div style="position:absolute;left:406.29999999999995px;top:405px;font-size:10.5px;line-height:15.8px;color:#007bff;white-space:nowrap;-webkit-text-stroke:0.25px #007bff;">1</div>
<div style="position:absolute;left:443.5px;top:405px;font-size:10.5px;line-height:15.8px;color:#007bff;white-space:nowrap;-webkit-text-stroke:0.25px #007bff;">1</div>
<div style="position:absolute;left:492.0999999999999px;top:405px;font-size:10.5px;line-height:15.8px;color:#007bff;white-space:nowrap;-webkit-text-stroke:0.25px #007bff;">0</div>
<div style="position:absolute;left:537.0999999999999px;top:405px;font-size:10.5px;line-height:15.8px;color:#007bff;white-space:nowrap;-webkit-text-stroke:0.25px #007bff;">47</div>
<div style="position:absolute;left:580.1999999999999px;top:405px;font-size:10.5px;line-height:15.8px;color:#007bff;white-space:nowrap;-webkit-text-stroke:0.25px #007bff;">1</div>
<div style="position:absolute;left:620.9px;top:405px;font-size:10px;line-height:15.8px;color:#212529;white-space:nowrap;-webkit-text-stroke:0.25px #212529;">2023-07-21<br>14:37:51</div>
<div style="position:absolute;left:688.2px;top:405px;font-size:10.5px;line-height:15.8px;color:#007bff;white-space:nowrap;-webkit-text-stroke:0.25px #007bff;">1</div>
<div style="position:absolute;left:726.0px;top:405px;font-size:10.5px;line-height:15.8px;color:#007bff;white-space:nowrap;-webkit-text-stroke:0.25px #007bff;">0</div>
<div style="position:absolute;left:780.2px;top:405px;font-size:10.5px;line-height:15.8px;color:#007bff;white-space:nowrap;-webkit-text-stroke:0.25px #007bff;">0</div>
<div style="position:absolute;left:226.60000000000002px;top:324.4px;width:17.6px;height:51px;background:#e4edfc;border-radius:9px"></div>
<div style="position:absolute;left:227px;top:334px;width:17px;height:24px;background:#d7e5fb"></div>
<div style="position:absolute;left:226.60000000000002px;top:403.5px;width:17.6px;height:51px;background:#e4edfc;border-radius:9px"></div>
<div style="position:absolute;left:227px;top:420px;width:17px;height:22px;background:#d9e6fb"></div>
</div>
<div style="position:absolute;left:1131px;top:0;width:319px;height:562px;overflow:hidden;background:#efeff4">
<div style="position:absolute;left:317.5999999999999px;top:0px;width:2px;height:562px;background:#000"></div>
<div style="position:absolute;left:0px;top:0px;width:317.5999999999999px;height:31px;background:#ededed"></div>
<div style="position:absolute;left:0px;top:31px;width:317.5999999999999px;height:37.5px;background:#f7f7f7"></div>
<div style="position:absolute;left:0px;top:68.5px;width:317.5999999999999px;height:1px;background:#e6e6e6"></div>
<svg style="position:absolute;left:7.7999999999999545px;top:5.7px" width="12" height="12" viewBox="0 0 12 12"><path d="M0.6 0.6L11.4 11.4M11.4 0.6L0.6 11.4" stroke="#222" stroke-width="1.3"/></svg>
<div style="position:absolute;left:57.40000000000009px;top:4.3px;width:200px;font-size:14px;line-height:15px;color:#111;white-space:nowrap;text-align:center;font-weight:bold">食学宝企业版</div>
<div style="position:absolute;left:290.9000000000001px;top:9.8px;width:3.2px;height:3.2px;background:#111;border-radius:50%"></div>
<div style="position:absolute;left:296.6000000000001px;top:9.8px;width:3.2px;height:3.2px;background:#111;border-radius:50%"></div>
<div style="position:absolute;left:302.30000000000007px;top:9.8px;width:3.2px;height:3.2px;background:#111;border-radius:50%"></div>
<div style="position:absolute;left:6.7999999999999545px;top:42.4px;width:17px;height:1.4px;background:#3a9ad9"></div>
<div style="position:absolute;left:6.7999999999999545px;top:48.4px;width:17px;height:1.4px;background:#3a9ad9"></div>
<div style="position:absolute;left:6.7999999999999545px;top:54.5px;width:17px;height:1.4px;background:#3a9ad9"></div>
<div style="position:absolute;left:59.0px;top:41.5px;width:200px;font-size:13.5px;line-height:15px;color:#222;white-space:nowrap;text-align:center;">学习统计</div>
<div style="position:absolute;left:5.7000000000000455px;top:75.5px;width:306.5px;height:286.5px;background:#fff"></div>
<div style="position:absolute;left:18.200000000000045px;top:85.5px;font-size:13.6px;line-height:16px;color:#2e2e2e;white-space:nowrap;">学员</div>
<div style="position:absolute;right:19px;top:85.5px;font-size:13.6px;line-height:16px;color:#2e2e2e;white-space:nowrap;text-align:right;">梅子</div>
<div style="position:absolute;left:18.200000000000045px;top:121.44999999999999px;font-size:13.6px;line-height:16px;color:#2e2e2e;white-space:nowrap;">今日学习时长</div>
<div style="position:absolute;right:19px;top:121.44999999999999px;font-size:13.6px;line-height:16px;color:#2e2e2e;white-space:nowrap;text-align:right;">0分钟</div>
<div style="position:absolute;left:18.200000000000045px;top:110.94999999999999px;width:294px;height:1.2px;background:#e8e8e8"></div>
<div style="position:absolute;left:18.200000000000045px;top:157.4px;font-size:13.6px;line-height:16px;color:#2e2e2e;white-space:nowrap;">总学习时长</div>
<div style="position:absolute;right:19px;top:157.4px;font-size:13.6px;line-height:16px;color:#2e2e2e;white-space:nowrap;text-align:right;">0.2小时</div>
<div style="position:absolute;left:18.200000000000045px;top:146.9px;width:294px;height:1.2px;background:#e8e8e8"></div>
<div style="position:absolute;left:18.200000000000045px;top:193.35000000000002px;font-size:13.6px;line-height:16px;color:#2e2e2e;white-space:nowrap;">连续学习天数</div>
<div style="position:absolute;right:19px;top:193.35000000000002px;font-size:13.6px;line-height:16px;color:#2e2e2e;white-space:nowrap;text-align:right;">0天</div>
<div style="position:absolute;left:18.200000000000045px;top:182.85000000000002px;width:294px;height:1.2px;background:#e8e8e8"></div>
<div style="position:absolute;left:18.200000000000045px;top:229.3px;font-size:13.6px;line-height:16px;color:#2e2e2e;white-space:nowrap;">总学习天数</div>
<div style="position:absolute;right:19px;top:229.3px;font-size:13.6px;line-height:16px;color:#2e2e2e;white-space:nowrap;text-align:right;">3天</div>
<div style="position:absolute;left:18.200000000000045px;top:218.8px;width:294px;height:1.2px;background:#e8e8e8"></div>
<div style="position:absolute;left:18.200000000000045px;top:265.25px;font-size:13.6px;line-height:16px;color:#2e2e2e;white-space:nowrap;">今日完成考试</div>
<div style="position:absolute;right:19px;top:265.25px;font-size:13.6px;line-height:16px;color:#2e2e2e;white-space:nowrap;text-align:right;">0个</div>
<div style="position:absolute;left:18.200000000000045px;top:254.75px;width:294px;height:1.2px;background:#e8e8e8"></div>
<div style="position:absolute;left:18.200000000000045px;top:301.20000000000005px;font-size:13.6px;line-height:16px;color:#2e2e2e;white-space:nowrap;">已完成考试</div>
<div style="position:absolute;right:19px;top:301.20000000000005px;font-size:13.6px;line-height:16px;color:#2e2e2e;white-space:nowrap;text-align:right;">2个</div>
<div style="position:absolute;left:18.200000000000045px;top:290.70000000000005px;width:294px;height:1.2px;background:#e8e8e8"></div>
<div style="position:absolute;left:18.200000000000045px;top:337.15000000000003px;font-size:13.6px;line-height:16px;color:#2e2e2e;white-space:nowrap;">通过考试</div>
<div style="position:absolute;right:19px;top:337.15000000000003px;font-size:13.6px;line-height:16px;color:#2e2e2e;white-space:nowrap;text-align:right;">1个</div>
<div style="position:absolute;left:18.200000000000045px;top:326.65000000000003px;width:294px;height:1.2px;background:#e8e8e8"></div>
<div style="position:absolute;left:59.0px;top:365.5px;width:200px;font-size:14.5px;line-height:17px;color:#111;white-space:nowrap;text-align:center;font-weight:bold">排行榜</div>
<div style="position:absolute;left:13.799999999999955px;top:394.9px;width:290.2px;height:32.7px;border:1px solid #7fb6e6;border-radius:2px;background:#fff"></div>
<div style="position:absolute;left:13.799999999999955px;top:394.9px;width:146.2px;height:32.7px;background:#007aff;border-radius:2px 0 0 2px"></div>
<div style="position:absolute;left:-13.299999999999955px;top:404.3px;width:200px;font-size:12.2px;line-height:15px;color:#fff;white-space:nowrap;text-align:center;">今日学习时长</div>
<div style="position:absolute;left:131.5px;top:404.3px;width:200px;font-size:12.2px;line-height:15px;color:#1a86d8;white-space:nowrap;text-align:center;">总学习时长</div>
<div style="position:absolute;left:5.900000000000091px;top:436.3px;width:306.4px;height:76.6px;border:1px solid #e4e4e8;background:#efeff4"></div>
<div style="position:absolute;left:5.900000000000091px;top:474.4px;width:306.4px;height:1px;background:#dedee3"></div>
<div style="position:absolute;left:168.5px;top:436.3px;width:1px;height:76.6px;background:#dedee3"></div>
<div style="position:absolute;left:16.299999999999955px;top:447px;font-size:14px;line-height:16px;color:#222;white-space:nowrap;">员工姓名</div>
<div style="position:absolute;left:178.20000000000005px;top:447px;font-size:14px;line-height:16px;color:#222;white-space:nowrap;">时长</div>
<div style="position:absolute;left:16.299999999999955px;top:485px;font-size:14px;line-height:16px;color:#222;white-space:nowrap;">徐晓琳</div>
<div style="position:absolute;left:178.20000000000005px;top:485px;font-size:14px;line-height:16px;color:#222;white-space:nowrap;">0.5小时</div>
<div style="position:absolute;left:0px;top:519.5px;width:317.5999999999999px;height:1.2px;background:#c8c8cc"></div>
<div style="position:absolute;left:0px;top:520.7px;width:317.5999999999999px;height:42px;background:#f7f7f7"></div>
<div style="position:absolute;left:-5.400000000000091px;top:547.6px;width:60px;font-size:8.6px;line-height:11px;color:#8e8e93;white-space:nowrap;text-align:center;">首页</div>
<div style="position:absolute;left:48.5px;top:546.0px;width:60px;font-size:8.6px;line-height:11px;color:#8e8e93;white-space:nowrap;text-align:center;">公开课程</div>
<div style="position:absolute;left:102.29999999999995px;top:547.6px;width:60px;font-size:8.6px;line-height:11px;color:#8e8e93;white-space:nowrap;text-align:center;">自建课程</div>
<div style="position:absolute;left:156.0px;top:547.7px;width:60px;font-size:8.6px;line-height:11px;color:#8e8e93;white-space:nowrap;text-align:center;">学习记录</div>
<div style="position:absolute;left:209.5999999999999px;top:546.1px;width:60px;font-size:8.6px;line-height:11px;color:#8e8e93;white-space:nowrap;text-align:center;">考试记录</div>
<div style="position:absolute;left:263.70000000000005px;top:547.7px;width:60px;font-size:8.6px;line-height:11px;color:#8e8e93;white-space:nowrap;text-align:center;">食学宝</div>
<svg style="position:absolute;left:16px;top:522.5px" width="17" height="16.5" viewBox="0 0 17 16.5"><path d="M1.2 7.6L8.5 1.2l7.3 6.4M3 6.2V15.5h11V6.2M7.2 15.5v-4.3h2.6v4.3" fill="none" stroke="#2196d9" stroke-width="1.5" stroke-linejoin="round"/></svg>
<svg style="position:absolute;left:69px;top:523.5px" width="18.5" height="15" viewBox="0 0 18.5 15"><path d="M1 2.2c2.5-1 5.5-1 8.2 0.6c2.7-1.6 5.7-1.6 8.2-0.6V14c-2.5-1-5.5-1-8.2 0.6C6.5 13 3.5 13 1 14z M9.2 2.8V14.6" fill="none" stroke="#2196d9" stroke-width="1.5"/><path d="M3.5 5.6h3.3M3.5 8.6h3.3" stroke="#2196d9" stroke-width="1.4"/><path d="M11.5 1.6h2.6v5.6l-1.3-1.2-1.3 1.2z" fill="#2196d9"/></svg>
<svg style="position:absolute;left:124.29999999999995px;top:522px" width="16" height="18" viewBox="0 0 16 18"><rect x="0.8" y="0.8" width="14.4" height="16.4" rx="1.6" fill="none" stroke="#2196d9" stroke-width="1.5"/><circle cx="4.2" cy="5.8" r="0.8" fill="#2196d9"/><circle cx="8" cy="5.8" r="0.8" fill="#2196d9"/><circle cx="11.8" cy="5.8" r="0.8" fill="#2196d9"/><path d="M3 9.8h7M3 12.6h10" stroke="#2196d9" stroke-width="1.2"/></svg>
<svg style="position:absolute;left:169px;top:518px" width="90" height="27" viewBox="0 0 90 27"><path d="M16.9 4.6A8.1 8.1 0 1 0 22.9 7.4" fill="none" stroke="#2196d9" stroke-width="1.8"/><path d="M25 5.8L21 5.6L21.5 9.6" fill="none" stroke="#2196d9" stroke-width="1.6"/><path d="M18 9.3V14.3H13.3" fill="none" stroke="#2196d9" stroke-width="1.8"/><rect x="62.8" y="5.9" width="15.6" height="14" rx="2.6" fill="none" stroke="#4aa6d8" stroke-width="1.5"/><path d="M65.2 7.8h7" stroke="#7bbde3" stroke-width="0.9"/><text x="70.6" y="15.4" font-size="7" font-style="italic" font-weight="bold" fill="#3d9bd6" text-anchor="middle" font-family="Liberation Serif">100</text></svg>
<svg style="position:absolute;left:274px;top:518px" width="40" height="27" viewBox="0 0 40 27"><path d="M26.6 13.2A7.1 7.1 0 1 0 19.7 21.2" fill="none" stroke="#1b2748" stroke-width="1.4"/><circle cx="19.8" cy="14.3" r="4" fill="none" stroke="#1b2748" stroke-width="1.1"/><circle cx="20" cy="14.4" r="1.2" fill="#1b2748"/><ellipse cx="12.3" cy="14.2" rx="1.4" ry="1.9" fill="#1b2748"/><ellipse cx="27.3" cy="14.2" rx="1.4" ry="1.9" fill="#1b2748"/><path d="M19.3 21.2h1.8" stroke="#1b2748" stroke-width="1.6" stroke-linecap="round"/><path d="M16.8 4.3L17.3 6.3M22.6 4.3L22.1 6.3M11 7.2L13.9 8.6M27.8 7.2L25 8.6" stroke="#1b2748" stroke-width="1.3"/></svg>
</div>
</body></html>
